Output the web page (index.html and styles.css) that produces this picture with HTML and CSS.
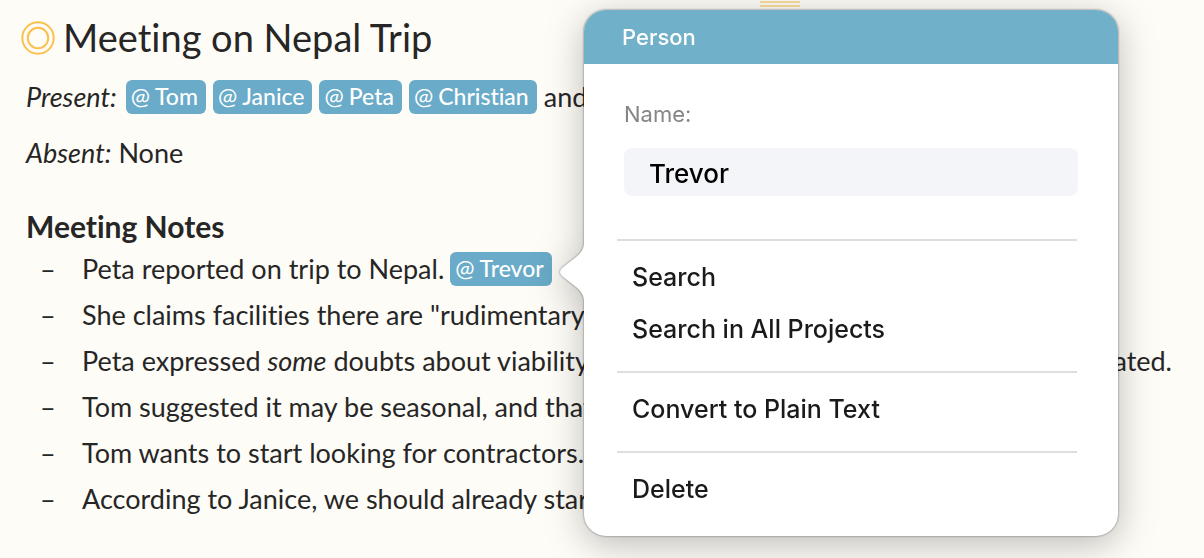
FILE: index.html
```html
<!DOCTYPE html>
<html lang="en">
<head>
  <meta charset="UTF-8">
  <meta name="viewport" content="width=device-width, initial-scale=1.0">
  <title>Meeting on Nepal Trip</title>
  <link rel="stylesheet" href="styles.css">
</head>
<body>
  <div class="handle"></div>

  <main class="note">
    <header class="note-header">
      <svg class="note-icon" width="34" height="34" viewBox="0 0 34 34" fill="none" stroke="#fbc04e" stroke-width="2">
        <circle cx="17" cy="17" r="15.7" />
        <circle cx="17" cy="17" r="10.2" />
      </svg>
      <h1>Meeting on Nepal Trip</h1>
    </header>

    <p class="line people">
      <em>Present:</em>
      <a class="tag" href="#tom"><span>@</span>Tom</a>
      <a class="tag" href="#janice"><span>@</span>Janice</a>
      <a class="tag" href="#peta"><span>@</span>Peta</a>
      <a class="tag" href="#christian"><span>@</span>Christian</a>
      and
    </p>
    <p class="line"><em>Absent:</em> None</p>

    <h2>Meeting Notes</h2>
    <ul class="notes">
      <li>Peta reported on trip to Nepal. <a class="tag" href="#trevor"><span>@</span>Trevor</a></li>
      <li>She claims facilities there are "rudimentary"</li>
      <li class="split"><span>Peta expressed <em>some</em> doubts about viability</span> <span>as stated.</span></li>
      <li>Tom suggested it may be seasonal, and that</li>
      <li>Tom wants to start looking for contractors.</li>
      <li>According to Janice, we should already start</li>
    </ul>
  </main>

  <form class="popover">
    <svg class="popover-arrow" width="27" height="60" viewBox="0 0 27 60">
      <path d="M27 0 H25 C25 7 22 11 17 15 L3 26 Q-1 30 3 34 L17 45 C22 49 25 53 25 60 H27 Z" fill="#fff" />
    </svg>
    <h3 class="popover-title">Person</h3>
    <div class="field">
      <label for="name">Name:</label>
      <input type="text" id="name" value="Trevor">
    </div>
    <div class="menu">
      <hr>
      <button type="button">Search</button>
      <button type="button">Search in All Projects</button>
      <hr>
      <button type="button">Convert to Plain Text</button>
      <hr>
      <button type="button">Delete</button>
    </div>
  </form>
</body>
</html>
```
FILE: styles.css
```css
* {
  margin: 0;
  padding: 0;
  box-sizing: border-box;
}

body {
  background: #fefcf7;
  color: #262626;
  font-family: Lato, "Open Sans", sans-serif;
  font-size: 27px;
  font-variant-ligatures: none;
  line-height: 46px;
  overflow: hidden;
}

.handle {
  position: absolute;
  top: 1px;
  left: 760px;
  width: 40px;
  height: 6px;
  border-top: 2px solid #fbdd9b;
  border-bottom: 2px solid #fbdd9b;
}

.note {
  padding: 8px 32px 32px 26px;
  white-space: nowrap;
}

.note-header {
  display: flex;
  align-items: center;
  gap: 8px;
  height: 58px;
  margin-left: -5px;
  margin-bottom: 8px;
}

.note-icon {
  margin-top: 2px;
}

h1 {
  font-size: 38px;
  font-weight: 400;
}

h2 {
  margin-top: 30px;
  font-size: 30px;
  font-weight: 700;
  line-height: 40px;
}

.line {
  margin-bottom: 10px;
}

.people {
  display: flex;
  align-items: center;
  gap: 7px;
}

.people em {
  margin-right: 2px;
}

.tag {
  display: inline-flex;
  gap: 5px;
  height: 34px;
  padding: 0 8px 0 5px;
  border-radius: 6px;
  background: #69abc8;
  color: #fff;
  font-size: 23px;
  font-weight: 500;
  line-height: 32px;
  text-decoration: none;
}

.tag span {
  font-weight: 400;
}

.notes {
  list-style: none;
}

.notes li {
  display: flex;
  align-items: center;
  gap: 6px;
  position: relative;
  height: 46px;
  padding-left: 56px;
}

.notes li::before {
  content: "–";
  position: absolute;
  left: 14px;
}

.notes .split {
  justify-content: space-between;
}

.popover {
  position: absolute;
  top: 10px;
  left: 584px;
  width: 534px;
  padding-bottom: 21px;
  border-radius: 22px;
  background: #fff;
  color: #1a1a1a;
  font-family: Inter, sans-serif;
  filter: drop-shadow(0 0 1px rgba(0, 0, 0, 0.5)) drop-shadow(0 8px 18px rgba(0, 0, 0, 0.26));
}

.popover-arrow {
  position: absolute;
  top: 232px;
  left: -25px;
}

.popover-title {
  height: 54px;
  padding-left: 38px;
  border-radius: 22px 22px 0 0;
  background: #70b0c8;
  color: #fff;
  font-size: 22px;
  font-weight: 500;
  line-height: 54px;
}

.field {
  display: flex;
  flex-direction: column;
  gap: 18px;
  padding: 34px 40px 43px;
}

.field label {
  color: #858585;
  font-size: 22px;
  line-height: 32px;
}

.field input {
  height: 48px;
  padding: 2px 25px 0;
  border: 0;
  border-radius: 8px;
  background: #f4f5f8;
  color: #000;
  font-family: inherit;
  font-size: 26px;
  font-weight: 500;
}

.menu {
  display: flex;
  flex-direction: column;
  padding: 0 41px 0 33px;
}

.menu hr {
  height: 2px;
  margin: 16px 0 10px;
  border: 0;
  background: #dedede;
}

.menu hr:first-child {
  margin-top: 0;
}

.menu button {
  height: 52px;
  padding-left: 15px;
  border: 0;
  background: none;
  color: inherit;
  font-family: inherit;
  font-size: 25px;
  font-weight: 500;
  text-align: left;
}
```
